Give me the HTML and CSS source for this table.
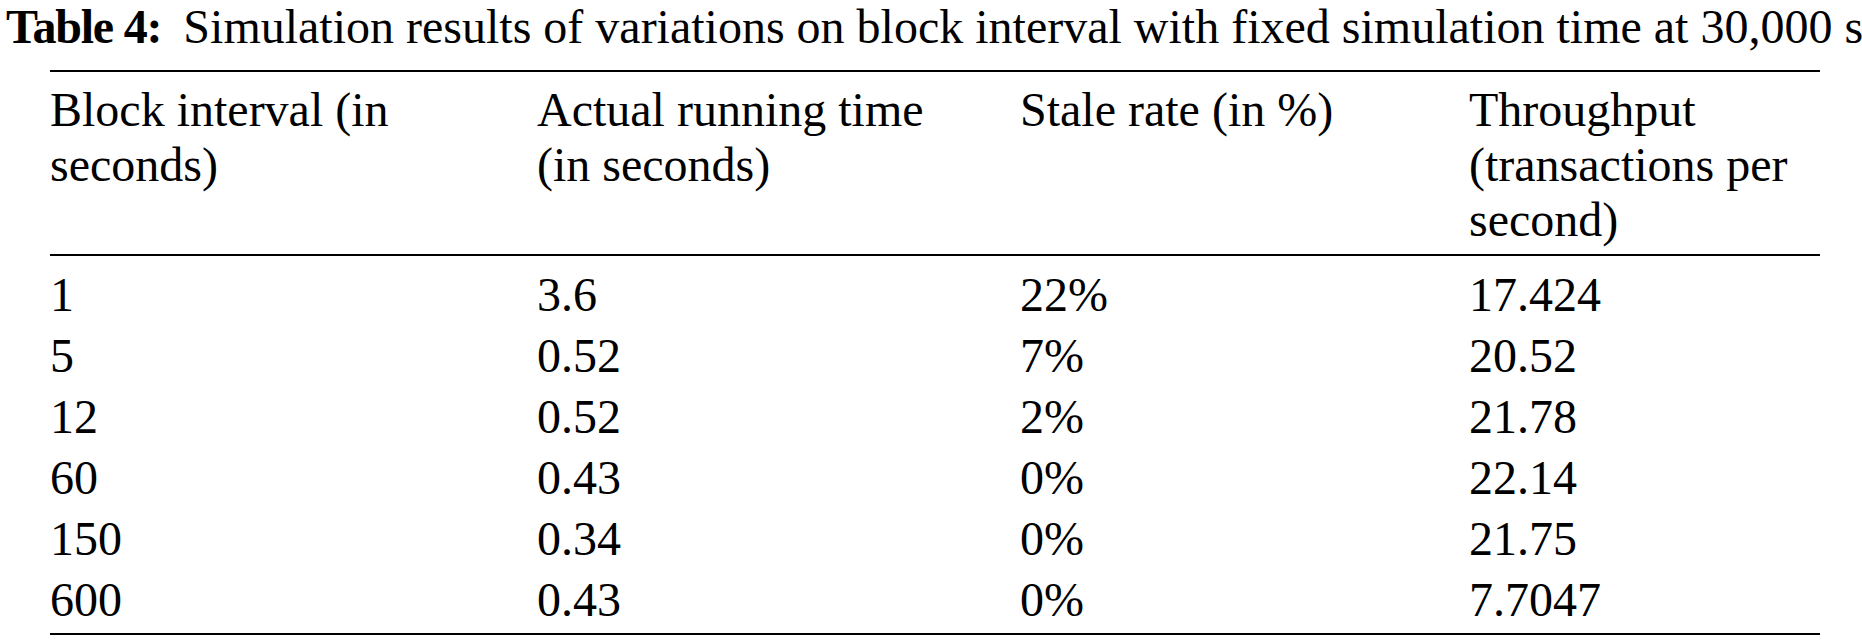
FILE: index.html
```html
<!DOCTYPE html>
<html lang="en">
<head>
<meta charset="utf-8">
<title>Table 4</title>
<link rel="stylesheet" href="styles.css">
</head>
<body>
<div class="caption"><span class="label">Table 4:</span><span class="text">Simulation results of variations on block interval with fixed simulation time at 30,000 s</span></div>
<div class="table">
  <div class="row head">
    <div class="cell">Block interval (in<br>seconds)</div>
    <div class="cell">Actual running time<br>(in seconds)</div>
    <div class="cell">Stale rate (in %)</div>
    <div class="cell">Throughput<br>(transactions per<br>second)</div>
  </div>
  <div class="body">
    <div class="row"><div class="cell">1</div><div class="cell">3.6</div><div class="cell">22%</div><div class="cell">17.424</div></div>
    <div class="row"><div class="cell">5</div><div class="cell">0.52</div><div class="cell">7%</div><div class="cell">20.52</div></div>
    <div class="row"><div class="cell">12</div><div class="cell">0.52</div><div class="cell">2%</div><div class="cell">21.78</div></div>
    <div class="row"><div class="cell">60</div><div class="cell">0.43</div><div class="cell">0%</div><div class="cell">22.14</div></div>
    <div class="row"><div class="cell">150</div><div class="cell">0.34</div><div class="cell">0%</div><div class="cell">21.75</div></div>
    <div class="row"><div class="cell">600</div><div class="cell">0.43</div><div class="cell">0%</div><div class="cell">7.7047</div></div>
  </div>
</div>
</body>
</html>
```

FILE: styles.css
```css
html, body {
  margin: 0;
  padding: 0;
  background: #ffffff;
}

body {
  font-family: "Liberation Serif", "Times New Roman", serif;
  font-size: 48px;
  color: #000000;
}

.caption {
  line-height: 54px;
  padding-left: 6px;
  white-space: nowrap;
}

.caption .label {
  font-weight: bold;
  letter-spacing: -1.2px;
  margin-right: 22px;
}

.table {
  margin: 16px 0 0 50px;
  width: 1770px;
  border-top: 2px solid #000;
  border-bottom: 2px solid #000;
}

.row {
  display: grid;
  grid-template-columns: 487px 483px 449px 1fr;
}

.head {
  line-height: 55px;
  padding: 10px 0 7px;
  border-bottom: 2px solid #000;
}

.body {
  line-height: 61px;
  padding: 8px 0 3px;
}

.cell {
  white-space: nowrap;
}
```
